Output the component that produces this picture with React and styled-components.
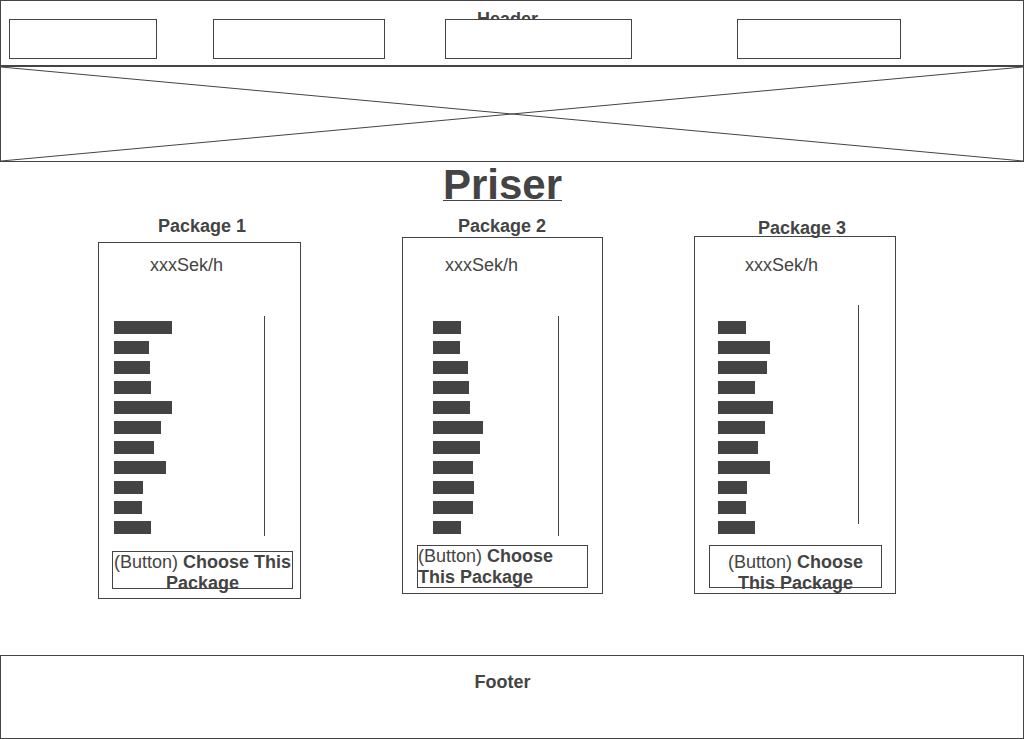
import React from "react";
import styled, { createGlobalStyle } from "styled-components";

const ink = "#444444";

const GlobalStyle = createGlobalStyle`
    * {
        box-sizing: border-box;
    }

    body {
        margin: 0;
        background: #ffffff;
        font-family: "Liberation Sans", Arial, sans-serif;
        color: ${ink};
    }
`;

const navBoxes = [
    { gap: 8, width: 148 },
    { gap: 56, width: 172 },
    { gap: 60, width: 187 },
    { gap: 105, width: 164 },
];

const packages = [
    {
        title: "Package 1",
        titleTop: 0,
        cardGap: 5,
        left: 46,
        width: 203,
        height: 357,
        priceTop: 12,
        priceLeft: 51,
        featureGap: 40,
        barsLeft: 15,
        barsCol: 150,
        barsPad: 5,
        line: 220,
        buttonGap: 15,
        buttonLeft: 13,
        buttonWidth: 181,
        buttonHeight: "38px",
        buttonPad: 0,
        align: "center",
        bars: [58, 35, 36, 37, 58, 47, 40, 52, 29, 28, 37],
    },
    {
        title: "Package 2",
        titleTop: 0,
        cardGap: 0,
        left: 50,
        width: 201,
        height: 357,
        priceTop: 17,
        priceLeft: 42,
        featureGap: 40,
        barsLeft: 30,
        barsCol: 125,
        barsPad: 5,
        line: 220,
        buttonGap: 9,
        buttonLeft: 14,
        buttonWidth: 171,
        buttonHeight: "auto",
        buttonPad: 0,
        align: "left",
        bars: [28, 27, 35, 36, 37, 50, 47, 40, 41, 40, 28],
    },
    {
        title: "Package 3",
        titleTop: 2,
        cardGap: -3,
        left: 42,
        width: 202,
        height: 358,
        priceTop: 18,
        priceLeft: 50,
        featureGap: 29,
        barsLeft: 23,
        barsCol: 140,
        barsPad: 16,
        line: 219,
        buttonGap: 11,
        buttonLeft: 14,
        buttonWidth: 173,
        buttonHeight: "43px",
        buttonPad: 6,
        align: "center",
        bars: [28, 52, 49, 37, 55, 47, 40, 52, 29, 28, 37],
    },
];

export default function App() {
    return (
        <Page>
            <GlobalStyle />
            <Header>
                <HeaderLabel>Header</HeaderLabel>
                <Nav>
                    {navBoxes.map((box, i) => (
                        <NavBox key={i} $gap={box.gap} $width={box.width} />
                    ))}
                </Nav>
            </Header>
            <Hero>
                <HeroCross viewBox="0 0 100 100" preserveAspectRatio="none">
                    <line x1="0" y1="0" x2="100" y2="100" vectorEffect="non-scaling-stroke" />
                    <line x1="0" y1="100" x2="100" y2="0" vectorEffect="non-scaling-stroke" />
                </HeroCross>
            </Hero>
            <Title>Priser</Title>
            <Packages>
                {packages.map((p) => (
                    <Column key={p.title}>
                        <PackageTitle $top={p.titleTop}>{p.title}</PackageTitle>
                        <Card $gap={p.cardGap} $left={p.left} $width={p.width} $height={p.height}>
                            <Price $top={p.priceTop} $left={p.priceLeft}>xxxSek/h</Price>
                            <Features $gap={p.featureGap} $left={p.barsLeft}>
                                <BarList $width={p.barsCol} $pad={p.barsPad}>
                                    {p.bars.map((w, i) => (
                                        <Bar key={i} $width={w} />
                                    ))}
                                </BarList>
                                <Divider $height={p.line} />
                            </Features>
                            <ChooseButton
                                $gap={p.buttonGap}
                                $left={p.buttonLeft}
                                $width={p.buttonWidth}
                                $height={p.buttonHeight}
                                $pad={p.buttonPad}
                                $align={p.align}
                            >
                                (Button) <strong>Choose This Package</strong>
                            </ChooseButton>
                        </Card>
                    </Column>
                ))}
            </Packages>
            <Footer>Footer</Footer>
        </Page>
    );
}

const Page = styled.div`
    width: 1024px;
`;

const Header = styled.header`
    position: relative;
    height: 66px;
    border: 1px solid ${ink};
    padding-top: 18px;
`;

const HeaderLabel = styled.div`
    position: absolute;
    top: 8px;
    left: 0;
    right: 9px;
    text-align: center;
    font-size: 18px;
    font-weight: bold;
    line-height: 21px;
`;

const Nav = styled.nav`
    display: flex;
`;

const NavBox = styled.div`
    position: relative;
    width: ${(props) => props.$width}px;
    height: 40px;
    margin-left: ${(props) => props.$gap}px;
    border: 1px solid ${ink};
    background: #ffffff;
`;

const Hero = styled.div`
    height: 96px;
    border: 1px solid ${ink};
`;

const HeroCross = styled.svg`
    display: block;
    width: 100%;
    height: 100%;

    line {
        stroke: ${ink};
        stroke-width: 1;
    }
`;

const Title = styled.h1`
    margin: 0;
    padding-right: 19px;
    text-align: center;
    font-size: 42px;
    font-weight: bold;
    line-height: 46px;
    text-decoration: underline;
    text-decoration-thickness: 1px;
`;

const Packages = styled.section`
    display: flex;
    align-items: flex-start;
    margin-top: 8px;
    padding-left: 52px;
`;

const Column = styled.div`
    display: flex;
    flex-direction: column;
    width: 300px;
`;

const PackageTitle = styled.h2`
    margin: ${(props) => props.$top}px 0 0;
    text-align: center;
    font-size: 18px;
    font-weight: bold;
    line-height: 21px;
`;

const Card = styled.div`
    position: relative;
    display: flex;
    flex-direction: column;
    align-items: flex-start;
    width: ${(props) => props.$width}px;
    height: ${(props) => props.$height}px;
    margin-top: ${(props) => props.$gap}px;
    margin-left: ${(props) => props.$left}px;
    border: 1px solid ${ink};
`;

const Price = styled.div`
    margin-top: ${(props) => props.$top}px;
    margin-left: ${(props) => props.$left}px;
    font-size: 18px;
    line-height: 21px;
`;

const Features = styled.div`
    display: flex;
    align-items: flex-start;
    margin-top: ${(props) => props.$gap}px;
    padding-left: ${(props) => props.$left}px;
`;

const BarList = styled.div`
    display: flex;
    flex-direction: column;
    gap: 7px;
    width: ${(props) => props.$width}px;
    padding-top: ${(props) => props.$pad}px;
`;

const Bar = styled.div`
    width: ${(props) => props.$width}px;
    height: 13px;
    background: ${ink};
`;

const Divider = styled.div`
    width: 1px;
    height: ${(props) => props.$height}px;
    background: ${ink};
`;

const ChooseButton = styled.div`
    width: ${(props) => props.$width}px;
    height: ${(props) => props.$height};
    margin-top: ${(props) => props.$gap}px;
    margin-left: ${(props) => props.$left}px;
    padding-top: ${(props) => props.$pad}px;
    border: 1px solid ${ink};
    text-align: ${(props) => props.$align};
    font-size: 18px;
    line-height: 20.7px;

    strong {
        font-weight: bold;
    }
`;

const Footer = styled.footer`
    height: 84px;
    margin-top: 56px;
    padding: 16px 19px 0 0;
    border: 1px solid ${ink};
    text-align: center;
    font-size: 18px;
    font-weight: bold;
    line-height: 21px;
`;
